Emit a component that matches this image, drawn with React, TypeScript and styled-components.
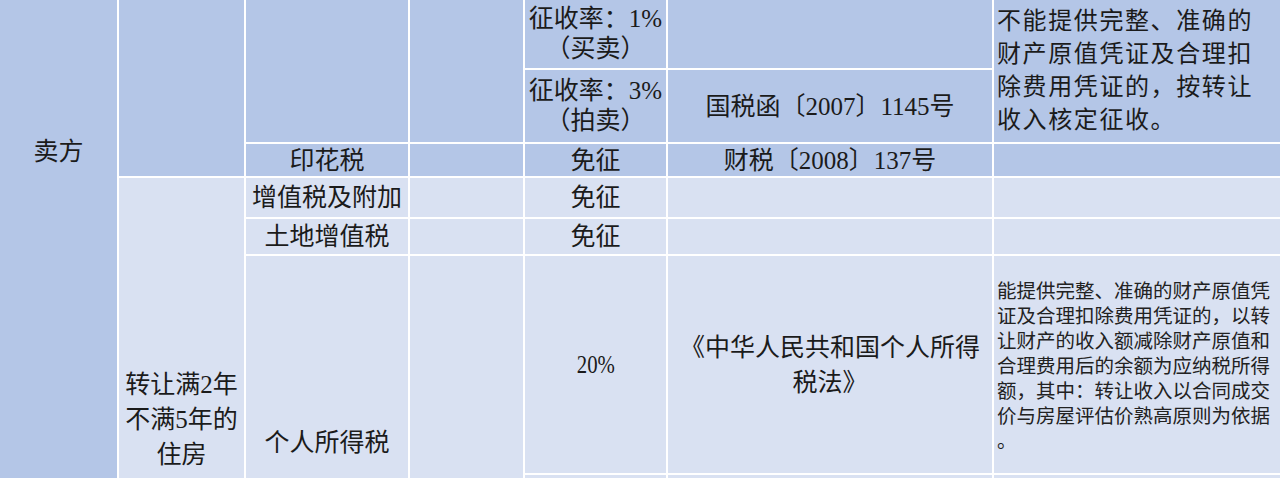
import React from "react";
import styled, { createGlobalStyle } from "styled-components";

const GlobalStyle = createGlobalStyle`
  html, body {
    margin: 0;
    padding: 0;
    background: #ffffff;
  }
  body {
    font-family: "Liberation Serif", "Noto Sans CJK SC", serif;
    color: #1b1b1b;
  }
`;

const DARK = "#b4c6e7";
const LIGHT = "#d9e1f2";

type Tone = "dark" | "light";
type VAlign = "flex-start" | "center" | "flex-end";

// sheet grid: white gaps act as the cell borders
const Sheet = styled.div`
  display: grid;
  grid-template-columns: 117px 125px 162px 113px 141px 324px 286px;
  grid-template-rows: 68px 72px 32px 39px 35px 217px 3px;
  gap: 2px;
  width: 1280px;
  height: 478px;
  background: #ffffff;
  overflow: hidden;
`;

const Cell = styled.div<{ $col: string; $row: string; $tone?: Tone; $v?: VAlign; $pad?: string }>`
  grid-column: ${(p) => p.$col};
  grid-row: ${(p) => p.$row};
  background: ${(p) => (p.$tone === "light" ? LIGHT : DARK)};
  display: flex;
  align-items: ${(p) => p.$v || "center"};
  padding: ${(p) => p.$pad || "0"};
  box-sizing: border-box;
  overflow: hidden;
`;

const Text = styled.div<{ $left?: boolean }>`
  width: 100%;
  font-size: 25px;
  line-height: 35px;
  text-align: ${(p) => (p.$left ? "left" : "center")};
  white-space: nowrap;
`;

const RateText = styled(Text)`
  line-height: 30px;
`;

const NoteTop = styled(Text)`
  font-size: 24px;
  letter-spacing: 1.6px;
  line-height: 33px;
  padding-left: 3px;
`;

const NoteSmall = styled(Text)`
  font-family: "Noto Sans CJK SC", sans-serif;
  font-size: 19.5px;
  line-height: 25px;
  padding-left: 3px;
  color: #222;
`;

// narrow, tall digits like the sheet's "20%"
const Percent = styled.span`
  display: inline-block;
  font-family: "Liberation Serif", serif;
  font-size: 26px;
  line-height: 30px;
  transform: scaleX(0.8);
`;

export default function App() {
  return (
    <>
      <GlobalStyle />
      <Sheet>
        <Cell $col="1" $row="1 / 8" $v="flex-start" $pad="137px 0 0 0">
          <RateText>卖方</RateText>
        </Cell>

        {/* upper block */}
        <Cell $col="2" $row="1 / 4" />
        <Cell $col="3" $row="1 / 3" />
        <Cell $col="4" $row="1 / 3" />
        <Cell $col="5" $row="1">
          <RateText>
            征收率：1%
            <br />
            （买卖）
          </RateText>
        </Cell>
        <Cell $col="6" $row="1" />
        <Cell $col="7" $row="1 / 3">
          <NoteTop $left>
            不能提供完整、准确的
            <br />
            财产原值凭证及合理扣
            <br />
            除费用凭证的，按转让
            <br />
            收入核定征收。
          </NoteTop>
        </Cell>
        <Cell $col="5" $row="2">
          <RateText>
            征收率：3%
            <br />
            （拍卖）
          </RateText>
        </Cell>
        <Cell $col="6" $row="2">
          <Text>国税函〔2007〕1145号</Text>
        </Cell>

        <Cell $col="3" $row="3">
          <Text>印花税</Text>
        </Cell>
        <Cell $col="4" $row="3" />
        <Cell $col="5" $row="3">
          <Text>免征</Text>
        </Cell>
        <Cell $col="6" $row="3">
          <Text>财税〔2008〕137号</Text>
        </Cell>
        <Cell $col="7" $row="3" />

        {/* lower block */}
        <Cell $col="2" $row="4 / 8" $tone="light" $v="flex-end" $pad="0 0 6px 0">
          <Text>
            转让满2年
            <br />
            不满5年的
            <br />
            住房
          </Text>
        </Cell>

        <Cell $col="3" $row="4" $tone="light">
          <Text>增值税及附加</Text>
        </Cell>
        <Cell $col="4" $row="4" $tone="light" />
        <Cell $col="5" $row="4" $tone="light">
          <Text>免征</Text>
        </Cell>
        <Cell $col="6" $row="4" $tone="light" />
        <Cell $col="7" $row="4" $tone="light" />

        <Cell $col="3" $row="5" $tone="light">
          <Text>土地增值税</Text>
        </Cell>
        <Cell $col="4" $row="5" $tone="light" />
        <Cell $col="5" $row="5" $tone="light">
          <Text>免征</Text>
        </Cell>
        <Cell $col="6" $row="5" $tone="light" />
        <Cell $col="7" $row="5" $tone="light" />

        <Cell $col="3" $row="6 / 8" $tone="light" $v="flex-end" $pad="0 0 18px 0">
          <Text>个人所得税</Text>
        </Cell>
        <Cell $col="4" $row="6 / 8" $tone="light" />
        <Cell $col="5" $row="6" $tone="light">
          <Text>
            <Percent>20%</Percent>
          </Text>
        </Cell>
        <Cell $col="6" $row="6" $tone="light">
          <Text>
            《中华人民共和国个人所得
            <br />
            税法》
          </Text>
        </Cell>
        <Cell $col="7" $row="6" $tone="light">
          <NoteSmall $left>
            能提供完整、准确的财产原值凭
            <br />
            证及合理扣除费用凭证的，以转
            <br />
            让财产的收入额减除财产原值和
            <br />
            合理费用后的余额为应纳税所得
            <br />
            额，其中：转让收入以合同成交
            <br />
            价与房屋评估价熟高原则为依据
            <br />
            。
          </NoteSmall>
        </Cell>

        <Cell $col="5" $row="7" $tone="light" />
        <Cell $col="6" $row="7" $tone="light" />
        <Cell $col="7" $row="7" $tone="light" />
      </Sheet>
    </>
  );
}
